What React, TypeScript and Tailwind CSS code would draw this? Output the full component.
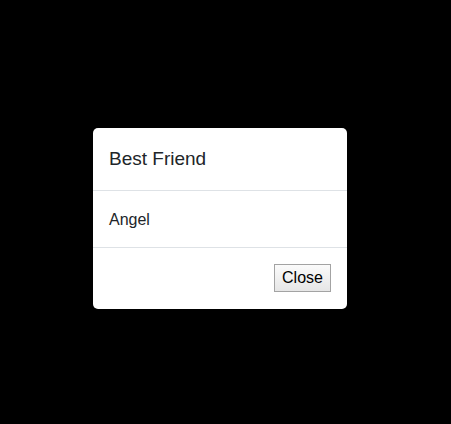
import React from "react";

const App = () => {
  return (
    <div className="min-h-[424px] w-full bg-black pt-[128px] pl-[93px] font-['Liberation_Sans',Arial,sans-serif] text-[#212529]">
      <div className="w-[254px] rounded-[5px] bg-white">
        <div className="border-b border-[#dee2e6] p-4">
          <h5 className="text-[19px] leading-[30px]">Best Friend</h5>
        </div>
        <div className="border-b border-[#dee2e6] p-4">
          <p className="text-[16px] leading-6 translate-y-px">Angel</p>
        </div>
        <div className="flex justify-end px-4 pt-[16px] pb-[17px]">
          <button className="h-[28px] w-[57px] border border-[#a3a3a3] bg-gradient-to-b from-[#fbfbfb] to-[#e6e6e6] text-[16px] leading-none text-black">
            Close
          </button>
        </div>
      </div>
    </div>
  );
};

export default App;
